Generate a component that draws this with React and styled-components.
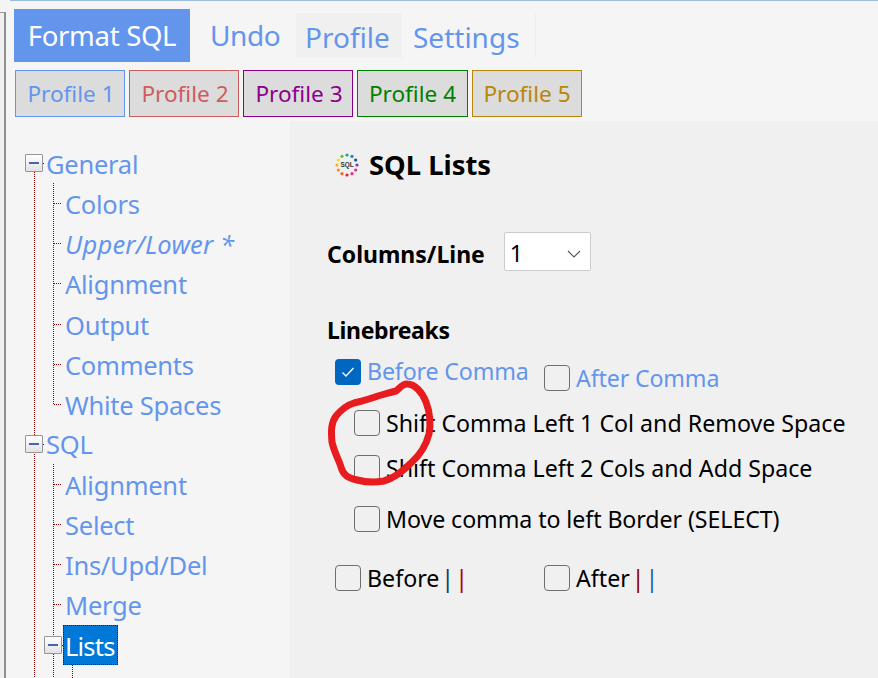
import React from "react";
import styled, { createGlobalStyle } from "styled-components";

const Global = createGlobalStyle`
  html, body { margin: 0; padding: 0; background: #f0f0f0; }
  * { box-sizing: border-box; }
`;

const Page = styled.div`
  position: relative;
  width: 878px;
  height: 678px;
  overflow: hidden;
  display: flex;
  font-family: "Noto Sans", "Open Sans", sans-serif;
  background: #f0f0f0;
`;

const WindowEdge = styled.div`
  width: 10px;
  flex: none;
  padding-top: 12px;
  background: #f4f4f4;
`;

const EdgeFrame = styled.div`
  width: 6px;
  height: 100%;
  border-top: 1px solid #9a9a9a;
  border-right: 2px solid #8f8f8f;
  background: #f0f0f0;
`;

const Main = styled.div`
  flex: 1;
  min-width: 0;
  display: flex;
  flex-direction: column;
  border-top: 1px solid #9dbddc;
`;

const Header = styled.header`
  height: 120px;
  flex: none;
  background: #f5f5f5;
  padding: 8px 0 0 4px;
`;

const Tabs = styled.div`
  display: flex;
  align-items: flex-start;
  height: 53px;
`;

const PrimaryTab = styled.div`
  width: 176px;
  height: 53px;
  background: #6495ed;
  color: #fff;
  font-size: 27.5px;
  line-height: 53px;
  text-align: center;
  letter-spacing: -0.3px;
`;

const Tab = styled.div`
  height: 45px;
  margin-top: 4px;
  margin-left: ${p => p.$gap || 0}px;
  width: ${p => p.$width}px;
  padding-left: ${p => p.$pad || 0}px;
  background: ${p => (p.$active ? "#f0f0f0" : "transparent")};
  border-right: ${p => (p.$divider ? "1px solid #eeeeee" : "none")};
  color: #6495ed;
  font-size: 28px;
  line-height: ${p => p.$line || 49}px;
  letter-spacing: ${p => p.$tight || 0}px;
`;

const ProfileRow = styled.div`
  display: flex;
  gap: 4px;
  margin: 8px 0 0 1px;
`;

const ProfileButton = styled.button`
  width: ${p => p.$width || 110}px;
  height: 47px;
  padding: 0 0 0 ${p => p.$pad ?? 2}px;
  border: 1px solid ${p => p.$color};
  border-radius: 0;
  background: #dcdcdc;
  color: ${p => p.$color};
  font-family: inherit;
  font-size: 22.6px;
`;

const Body = styled.div`
  flex: 1;
  min-height: 0;
  display: flex;
`;

const Sidebar = styled.nav`
  width: 280px;
  flex: none;
  background: #f5f5f5;
  padding: 22px 0 0 15px;
  overflow: hidden;
  color: #6495ed;
  font-size: 25.5px;
  letter-spacing: -0.25px;
`;

const dottedV = `repeating-linear-gradient(to bottom, #8b0000 0 1px, transparent 1px 2px)`;
const dottedH = `repeating-linear-gradient(to right, #8b0000 0 1px, transparent 1px 2px)`;

const Trunk = styled.div`
  position: relative;
  &::before {
    content: "";
    position: absolute;
    left: 9px;
    top: 29px;
    bottom: 0;
    width: 1px;
    background: ${dottedV};
  }
`;

const Row = styled.div`
  position: relative;
  height: 40.125px;
  display: flex;
  align-items: center;
  white-space: nowrap;
  &::before {
    content: "";
    position: absolute;
    left: 18px;
    top: 50%;
    width: 2px;
    height: 1px;
    background: ${dottedH};
  }
`;

const Toggle = styled.span`
  position: relative;
  z-index: 1;
  width: 18px;
  height: 18px;
  flex: none;
  border: 1px solid #969696;
  border-radius: 1px;
  background: linear-gradient(#ffffff, #e2e2e2);
  &::after {
    content: "";
    position: absolute;
    left: 3px;
    top: 7px;
    width: 10px;
    height: 2px;
    background: #4a63ad;
  }
`;

const NodeLabel = styled.span`
  margin-left: 3px;
  padding-top: 1px;
`;

const SelectedLabel = styled.span`
  position: relative;
  margin-left: 1px;
  height: 40px;
  padding: 0 0 0 2px;
  width: 55px;
  line-height: 42px;
  letter-spacing: -0.8px;
  color: #fff;
  background: #0078d7;
  outline: 1px dotted #222;
  outline-offset: -1px;
`;

const Children = styled.div`
  position: relative;
  padding-left: 19px;
  &::before {
    content: "";
    position: absolute;
    left: 28px;
    top: 0;
    bottom: ${p => (p.$open ? "0" : "20px")};
    width: 1px;
    background: ${dottedV};
  }
`;

const Leaf = styled.div`
  position: relative;
  height: 40.125px;
  display: flex;
  align-items: center;
  white-space: nowrap;
  padding: ${p => p.$drop || 2}px 0 0 ${p => p.$left || 21}px;
  font-style: ${p => (p.$italic ? "italic" : "normal")};
  letter-spacing: ${p => (p.$italic ? "0.2px" : "inherit")};
  &::before {
    content: "";
    position: absolute;
    left: 10px;
    top: 50%;
    width: 8px;
    height: 1px;
    background: ${dottedH};
  }
`;

const Content = styled.main`
  flex: 1;
  min-width: 0;
  padding: 32px 0 0 37px;
  color: #000;
  font-size: 23.2px;
`;

const Title = styled.h1`
  display: flex;
  align-items: center;
  gap: 9px;
  height: 24px;
  margin: 0 0 0 7px;
  font-size: 27.4px;
  font-weight: 700;
`;

const TitleText = styled.span`
  margin-bottom: 2px;
`;

const ColumnsRow = styled.div`
  display: flex;
  align-items: center;
  margin-top: 55px;
`;

const Strong = styled.div`
  font-size: 23px;
  font-weight: 700;
  line-height: 30px;
  letter-spacing: ${p => p.$tight || 0}px;
`;

const ColumnsLabel = styled(Strong)`
  padding-top: 4px;
`;

const FakeSelect = styled.div`
  position: relative;
  width: 87px;
  height: 39px;
  margin-left: 19px;
  padding-left: 5px;
  background: #fff;
  border: 1px solid #cccccc;
  border-radius: 2px;
  line-height: 41px;
`;

const Chevron = styled.svg`
  position: absolute;
  right: 9px;
  top: 17px;
`;

const Section = styled(Strong)`
  margin-top: 44px;
`;

const CheckRow = styled.div`
  display: flex;
  align-items: flex-start;
  margin: ${p => p.$top}px 0 0 ${p => p.$indent}px;
`;

const Check = styled.label`
  display: flex;
  align-items: center;
  gap: 6px;
  height: 26px;
  width: ${p => (p.$width ? `${p.$width}px` : "auto")};
  margin-top: ${p => p.$drop || 0}px;
  white-space: nowrap;
  color: ${p => p.$color || "#000"};
  letter-spacing: ${p => p.$tight || 0}px;
`;

const RaisedText = styled.span`
  margin-bottom: 2px;
`;

const Box = styled.span`
  width: 26px;
  height: 26px;
  flex: none;
  display: flex;
  align-items: center;
  justify-content: center;
  border-radius: 4px;
  border: ${p => (p.$on ? "none" : "1.5px solid #6e6e6e")};
  background: ${p => (p.$on ? "#0067c0" : "transparent")};
`;

const BarPair = styled.span`
  display: inline-flex;
  gap: 1px;
  margin-left: 2px;
`;

const Bar = styled.span`
  color: ${p => p.$color};
`;

const Scribble = styled.svg`
  position: absolute;
  left: 0;
  top: 0;
  pointer-events: none;
`;

const dots = ["#1aa58c","#1689c9","#14509e","#7a3fa0","#d0359a","#e8317c","#e82127","#ef6a22","#f58a1f","#f9b116","#f2e21b","#62c22f"];

function SqlLogo() {
  return (
    <svg width="26" height="26" viewBox="0 0 26 26" aria-hidden="true">
      {dots.map((c, i) => {
        const a = (i * 30 - 90) * Math.PI / 180;
        return <circle key={c} cx={13 + 10 * Math.cos(a)} cy={13 + 10 * Math.sin(a)} r="1.6" fill={c} />;
      })}
      <text x="13" y="15.2" textAnchor="middle" fontSize="6.4" fontFamily="Liberation Sans" fill="#333">SQL</text>
    </svg>
  );
}

function Tick() {
  return (
    <svg width="14" height="12" viewBox="0 0 14 12" aria-hidden="true">
      <path d="M1.5 6.5 L5 10 L12.5 2" fill="none" stroke="#fff" strokeWidth="1.4" />
    </svg>
  );
}

export default function App() {
  return (
    <Page>
      <Global />
      <WindowEdge><EdgeFrame /></WindowEdge>
      <Main>
        <Header>
          <Tabs>
            <PrimaryTab>Format SQL</PrimaryTab>
            <Tab $gap={20} $width={86} $line={45} $tight={-0.4}>Undo</Tab>
            <Tab $width={106} $pad={9} $active>Profile</Tab>
            <Tab $gap={11} $width={123} $divider>Settings</Tab>
          </Tabs>
          <ProfileRow>
            <ProfileButton $color="#6495ed">Profile 1</ProfileButton>
            <ProfileButton $color="#cd5c5c">Profile 2</ProfileButton>
            <ProfileButton $color="#8b008b">Profile 3</ProfileButton>
            <ProfileButton $color="#008000" $width={111} $pad={0}>Profile 4</ProfileButton>
            <ProfileButton $color="#b8860b" $pad={0}>Profile 5</ProfileButton>
          </ProfileRow>
        </Header>
        <Body>
          <Sidebar>
            <Trunk>
              <Row><Toggle /><NodeLabel>General</NodeLabel></Row>
              <Children>
                <Leaf>Colors</Leaf>
                <Leaf $italic>Upper/Lower *</Leaf>
                <Leaf>Alignment</Leaf>
                <Leaf>Output</Leaf>
                <Leaf>Comments</Leaf>
                <Leaf>White Spaces</Leaf>
              </Children>
              <Row><Toggle /><NodeLabel>SQL</NodeLabel></Row>
              <Children $open>
                <Leaf>Alignment</Leaf>
                <Leaf>Select</Leaf>
                <Leaf>Ins/Upd/Del</Leaf>
                <Leaf>Merge</Leaf>
                <Row><Toggle /><SelectedLabel>Lists</SelectedLabel></Row>
                <Children $open>
                  <Leaf $drop={8} $left={23}>MultiLists</Leaf>
                </Children>
              </Children>
            </Trunk>
          </Sidebar>
          <Content>
            <Title><SqlLogo /><TitleText>SQL Lists</TitleText></Title>
            <ColumnsRow>
              <ColumnsLabel>Columns/Line</ColumnsLabel>
              <FakeSelect>
                1
                <Chevron width="14" height="8" viewBox="0 0 14 8" aria-hidden="true">
                  <path d="M1 1 L7 7 L13 1" fill="none" stroke="#555" strokeWidth="1.1" />
                </Chevron>
              </FakeSelect>
            </ColumnsRow>
            <Section $tight={-0.35}>Linebreaks</Section>
            <CheckRow $top={14} $indent={8}>
              <Check $width={209} $color="#6495ed" $tight={-0.15}><Box $on><Tick /></Box><RaisedText>Before Comma</RaisedText></Check>
              <Check $drop={6} $color="#6495ed" $tight={-0.15}><Box />After Comma</Check>
            </CheckRow>
            <CheckRow $top={19} $indent={27}>
              <Check><Box />Shift Comma Left 1 Col and Remove Space</Check>
            </CheckRow>
            <CheckRow $top={19} $indent={27}>
              <Check><Box />Shift Comma Left 2 Cols and Add Space</Check>
            </CheckRow>
            <CheckRow $top={25} $indent={27}>
              <Check $tight={-0.08}><Box />Move comma to left Border (SELECT)</Check>
            </CheckRow>
            <CheckRow $top={33} $indent={8}>
              <Check $width={209}><Box /><span>Before<BarPair><Bar $color="#0b3d6e">|</Bar><Bar $color="#b00000">|</Bar></BarPair></span></Check>
              <Check><Box /><span>After<BarPair><Bar $color="#8b0000">|</Bar><Bar $color="#1a5fb4">|</Bar></BarPair></span></Check>
            </CheckRow>
          </Content>
        </Body>
      </Main>
      <Scribble width="878" height="678" viewBox="0 0 878 678" aria-hidden="true">
        <path
          d="M396 391 C400 388 402 384 407 384 C415 384 422 392 426 402 C430 412 431 425 429 434 C426 446 420 455 411 463 C403 471 395 478 384 481 C374 483 365 482 357 480 C348 478 343 475 341 467 C339 460 334 452 332 442 C331 431 331 423 336 416 C341 410 347 405 354 403 C362 401 370 399 378 396 C385 394 391 392 396 391 Z"
          fill="none"
          stroke="#e81c1f"
          strokeWidth="7"
          strokeLinejoin="round"
        />
      </Scribble>
    </Page>
  );
}
